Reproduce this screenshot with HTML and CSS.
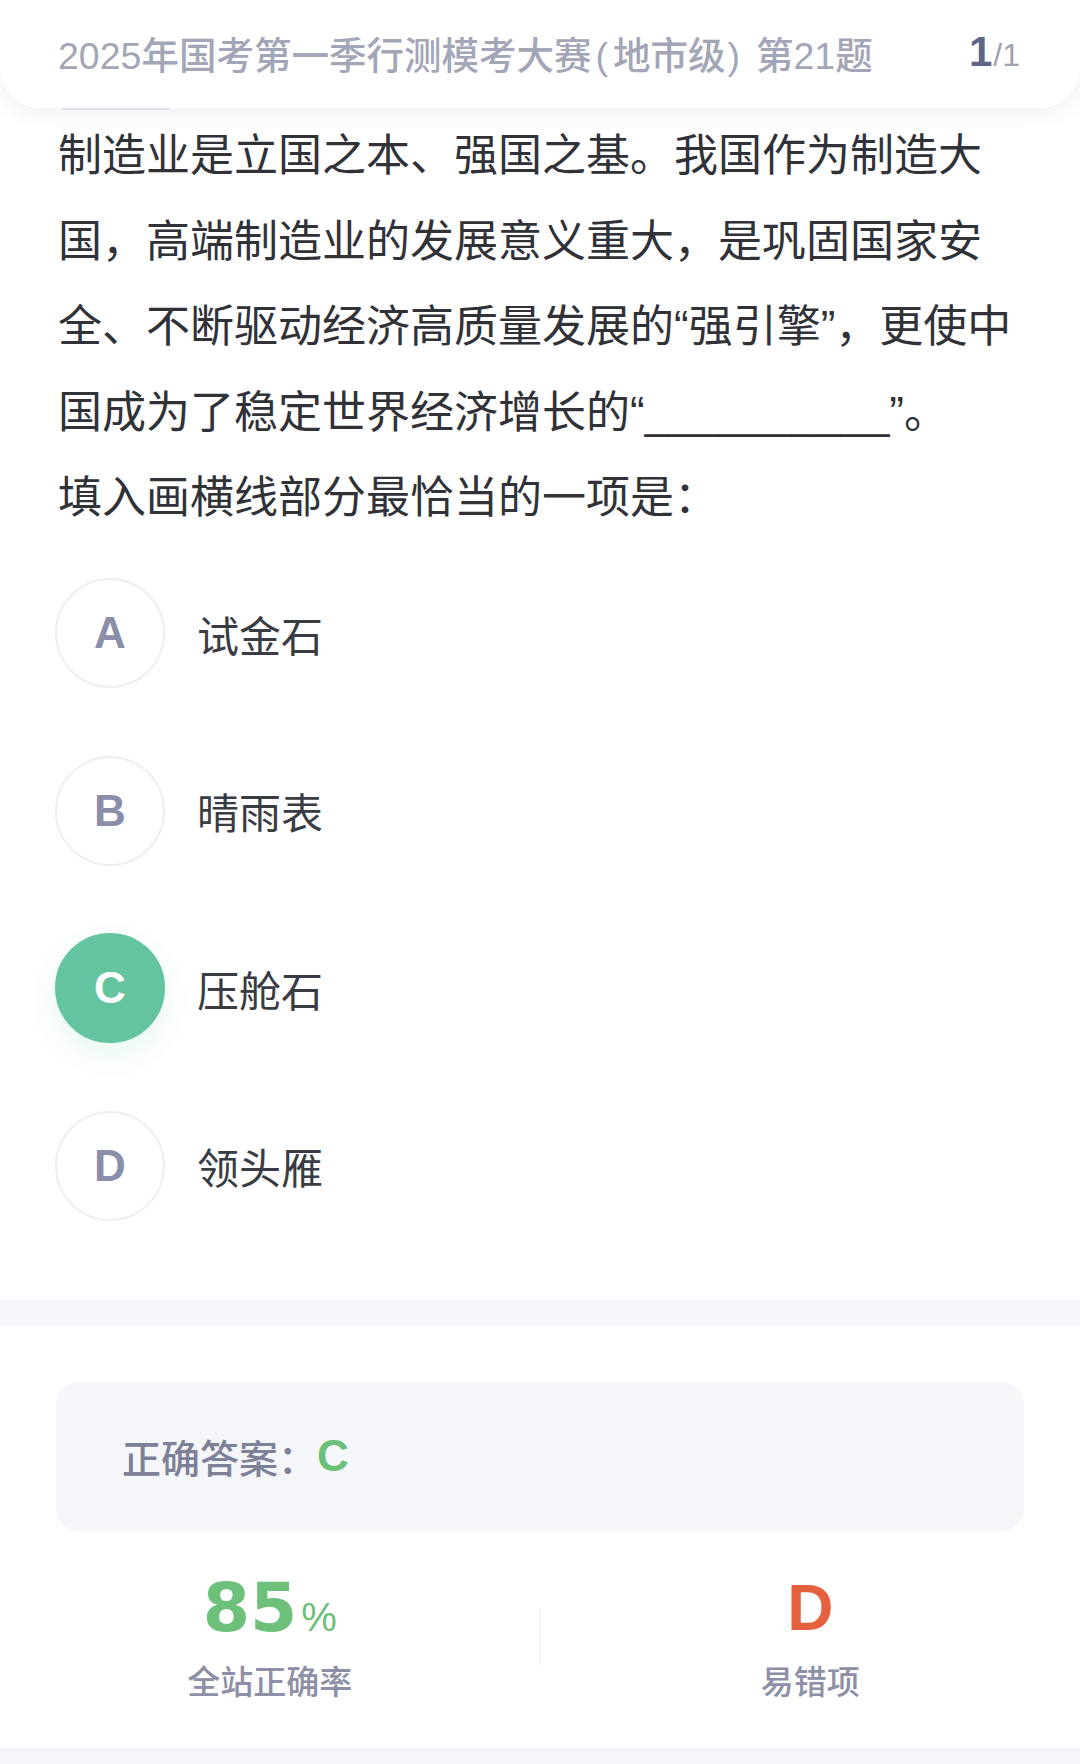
FILE: index.html
```html
<!DOCTYPE html>
<html lang="zh-CN">
<head>
  <meta charset="UTF-8">
  <meta name="viewport" content="width=device-width, initial-scale=1.0">
  <title>第21题</title>
  <link rel="stylesheet" href="styles.css">
</head>
<body>
  <header class="top-bar">
    <h1 class="paper-title">2025年国考第一季行测模考大赛<span class="lp">(</span>地市级<span class="rp">)</span>第21题</h1>
    <div class="page-no"><span class="cur">1</span><span class="total">/1</span></div>
  </header>

  <main class="question-wrap">
    <div class="tab-line"></div>
    <div class="question">
      <p>制造业是立国之本、强国之基。我国作为制造大国，高端制造业的发展意义重大，是巩固国家安全、不断驱动经济高质量发展的“强引擎”，更使中国成为了稳定世界经济增长的“__________”。</p>
      <p>填入画横线部分最恰当的一项是：</p>
    </div>

    <ul class="options">
      <li class="option"><span class="letter">A</span><span class="opt-text">试金石</span></li>
      <li class="option"><span class="letter">B</span><span class="opt-text">晴雨表</span></li>
      <li class="option on"><span class="letter">C</span><span class="opt-text">压舱石</span></li>
      <li class="option"><span class="letter">D</span><span class="opt-text">领头雁</span></li>
    </ul>
  </main>

  <div class="gap-band"></div>

  <section class="result">
    <div class="answer-box">
      <span class="answer-label">正确答案：</span><span class="answer-key">C</span>
    </div>
    <div class="stats">
      <div class="stat">
        <div class="stat-num green">85<small>%</small></div>
        <div class="stat-label">全站正确率</div>
      </div>
      <div class="stat-line"></div>
      <div class="stat">
        <div class="stat-num red">D</div>
        <div class="stat-label">易错项</div>
      </div>
    </div>
  </section>

  <div class="bottom-band"></div>
</body>
</html>
```

FILE: styles.css
```css
*{margin:0;padding:0;box-sizing:border-box;}
ul, li{list-style:none;}

body {
  background: #fff;
  font-family: "Liberation Sans", "Noto Sans CJK SC", sans-serif;
  color: #33353c;
}

/* 상단 바 */
.top-bar {
  position: relative;
  z-index: 2;
  height: 108px;
  padding: 0 60px 4px 58px;
  display: flex;
  align-items: center;
  justify-content: space-between;
  background: #fff;
  border-radius: 0 0 40px 40px;
  box-shadow: 0 6px 22px rgba(40, 50, 80, 0.07);
}
.paper-title {
  font-size: 37.5px;
  font-weight: 500;
  color: #a3a6b6;
  white-space: nowrap;
}
.paper-title .lp {margin: 0 5px 0 4px;}
.paper-title .rp {margin: 0 16px 0 2px;}
.page-no {
  display: flex;
  align-items: baseline;
  font-family: "Liberation Sans", sans-serif;
}
.page-no .cur {
  font-size: 42px;
  font-weight: bold;
  color: #5f6685;
}
.page-no .total {
  font-size: 32px;
  color: #9ea2b4;
  margin-left: 1px;
}

/* 문제 */
.question-wrap {
  padding: 0 58px;
}
.tab-line {
  width: 107px;
  height: 2px;
  margin-left: 4px;
  background: #e8eaf1;
}
.question {
  margin-top: 3px;
  font-size: 44px;
  line-height: 85.5px;
  color: #303238;
}

.options {
  margin: 37.5px 0 0 -3px;
  display: flex;
  flex-direction: column;
  gap: 67.5px;
}
.option {
  display: flex;
  align-items: center;
  height: 110px;
}
.letter {
  width: 110px;
  height: 110px;
  border-radius: 50%;
  border: 2px solid #efeff1;
  display: flex;
  align-items: center;
  justify-content: center;
  font-family: "Liberation Sans", sans-serif;
  font-size: 44px;
  font-weight: bold;
  color: #8a8ea9;
  flex-shrink: 0;
}
.opt-text {
  margin-left: 32px;
  font-size: 42px;
  color: #3a3c44;
}
.option.on .letter {
  background: #64c49f;
  border-color: #64c49f;
  color: #fff;
  box-shadow: 0 12px 34px rgba(100, 196, 159, 0.16);
}

.gap-band {
  margin-top: 78px;
  height: 27px;
  background: #f5f6f9;
}

/* 정답 */
.result {
  padding: 56px 56px 0;
}
.answer-box {
  height: 149px;
  padding: 0 66px;
  display: flex;
  align-items: center;
  background: #f5f6fa;
  border-radius: 22px;
}
.answer-label {
  font-size: 39px;
  font-weight: 500;
  color: #7d8197;
}
.answer-key {
  font-family: "Liberation Sans", sans-serif;
  font-size: 44px;
  font-weight: bold;
  color: #6cc07a;
}

.stats {
  margin: 0 -56px;
  padding: 37px 0 40px;
  display: flex;
  align-items: center;
}
.stat {
  flex: 1;
  text-align: center;
}
.stat-line {
  width: 1px;
  height: 58px;
  background: #eeeff2;
}
.stat-num {
  height: 80px;
  line-height: 80px;
  font-family: "Liberation Sans", sans-serif;
  font-size: 64px;
  font-weight: bold;
}
.stat-num.green {
  font-family: "DejaVu Sans", sans-serif;
  font-size: 68px;
  color: #6cc07a;
}
.stat-num small {
  font-family: "Liberation Sans", sans-serif;
  font-size: 40px;
  font-weight: normal;
  margin-left: 4px;
}
.stat-num.red {color: #e5603c;}
.stat-label {
  margin-top: 10px;
  line-height: 50px;
  font-size: 33px;
  font-weight: 500;
  color: #8c8fa6;
}

.bottom-band {
  height: 17px;
  background: #f5f6f9;
}
```
